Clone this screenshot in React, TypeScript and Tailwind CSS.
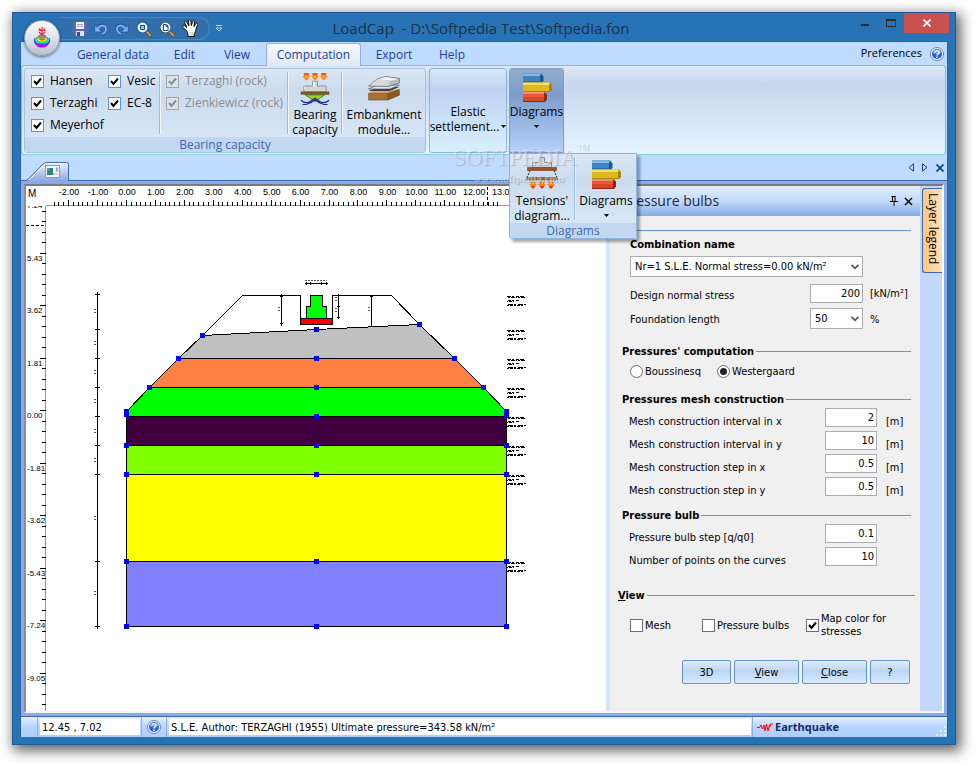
/**
 * @fileoverview LoadCap main window: ribbon, section drawing and pressure bulbs panel
 * @version 1.0.0
 */

import { memo, useState } from 'react';
import type { ReactNode } from 'react';

const TABS = ['General data', 'Edit', 'View', 'Computation', 'Export', 'Help'];

const TAB_WIDTHS: Record<string, string> = {
  'General data': 'w-[88px]',
  Edit: 'w-[55px]',
  View: 'w-[50px]',
  Computation: 'w-[95px]',
  Export: 'w-[58px]',
  Help: 'w-[58px]',
};

const MESH_FIELDS = [
  { id: 'interval-x', label: 'Mesh construction interval in x', value: '2', unit: '[m]' },
  { id: 'interval-y', label: 'Mesh construction interval in y', value: '10', unit: '[m]' },
  { id: 'step-x', label: 'Mesh construction step in x', value: '0.5', unit: '[m]' },
  { id: 'step-y', label: 'Mesh construction step in y', value: '0.5', unit: '[m]' },
];

const BULB_FIELDS = [
  { id: 'bulb-step', label: 'Pressure bulb step [q/q0]', value: '0.1', unit: '' },
  { id: 'curve-points', label: 'Number of points on the curves', value: '10', unit: '' },
];

/* ------------------------------------------------------------------ */
/* Icons                                                               */
/* ------------------------------------------------------------------ */

const OrbLogo = () => (
  <svg viewBox="0 0 18 22" className="w-[18px] h-[22px]" aria-hidden="true">
    <path d="M9 0v7M6 1.5l2 2M12 1.5l-2 2M6 5l3 3 3-3M5.500 3.500h7" stroke="#e8302c" strokeWidth="1.200" fill="none" />
    <path d="M6.500 8h5l4 4h-13z" fill="#8d9196" stroke="#4a4d52" strokeWidth=".6" />
    <path d="M1 11.500h16c.8 4-1.500 6-3 7.500-1 2-9 2-10 0C2.500 17.500.2 15.500 1 11.500z" fill="#b512f0" />
    <path d="M1 11.500h16c.5 3-1 5-3.500 6h-9C2 16.500.5 14.500 1 11.500z" fill="#1d4bff" />
    <path d="M1.500 11.500h15c0 3-2 4.500-4 5h-7c-2-.5-4-2-4-5z" fill="#19dce0" />
    <path d="M2.500 11.500h13c0 2.500-2 3.800-4 4h-5c-2-.2-4-1.500-4-4z" fill="#37e22c" />
    <path d="M4 11.500h10c0 2-2 3-3.500 3h-3C6 14.500 4 13.500 4 11.500z" fill="#fff01e" />
    <path d="M6 11.500h6c0 1.500-1.200 2-3 2s-3-.5-3-2z" fill="#ff4b1e" />
  </svg>
);

const SaveIcon = () => (
  <svg viewBox="0 0 14 14" className="w-3.5 h-3.5" aria-hidden="true">
    <path d="M0 0h14v14H2l-2-2z" fill="#5f63b4" />
    <path d="M3 0h8v7H3z" fill="#f2f4fb" />
    <path d="M4 2.500h6M4 4.500h6" stroke="#9aa0cc" />
    <path d="M3 9h8v5H3z" fill="#dfe3f0" />
    <path d="M4 10h3v4H4z" fill="#3e4290" />
  </svg>
);

const UndoIcon = ({ flip }: { flip?: boolean }) => (
  <svg viewBox="0 0 14 14" className={flip ? 'w-3.5 h-3.5 -scale-x-100' : 'w-3.5 h-3.5'} aria-hidden="true">
    <path d="M5 5C7 1.500 12 2.500 12 7c0 3-1.500 4.500-4 5.500" fill="none" stroke="#2456ad" strokeWidth="3.200" />
    <path d="M.8 3v7h7z" fill="#86b0f5" stroke="#2456ad" strokeWidth=".8" />
    <path d="M4 6.500C6.500 2 12 3 12 7c0 2.600-1.300 4-3.800 5" fill="none" stroke="#86b0f5" strokeWidth="1.800" />
  </svg>
);

const LensIcon = ({ page }: { page?: boolean }) => (
  <svg viewBox="0 0 16 16" className="w-4 h-4" aria-hidden="true">
    <path d="M10 10l4.500 4.500" stroke="#6d4a1d" strokeWidth="3" strokeLinecap="round" />
    <path d="M10.500 10.500l4 4" stroke="#e9b25c" strokeWidth="1.500" strokeLinecap="round" />
    <circle cx="6.500" cy="6.500" r="5.400" fill="#d9ecfb" stroke="#3d5772" strokeWidth="1.200" />
    <circle cx="6.500" cy="6.500" r="4.400" fill="none" stroke="#fff" strokeWidth=".8" />
    {page ? (
      <path d="M4.500 3.500h3l1.500 1.500v4.500h-4.500zM7 3.500v2h2" fill="#fff" stroke="#1c4f80" />
    ) : (
      <path d="M4.500 4.500h4v4h-4z" fill="#8fc3ea" stroke="#1c4f80" />
    )}
  </svg>
);

const HandIcon = () => (
  <svg viewBox="0.500 1 15 16" className="w-4 h-[17px]" aria-hidden="true">
    <path
      d="M5 11.500L1.500 8c-1-1.200.5-2.500 1.700-1.500L5 8 3 3.500C2.600 2 4.300 1.500 5 2.800L7 6.500 6.600 2c0-1.500 2-1.500 2.200 0l.5 4.300 1.200-4c.5-1.300 2.100-.9 1.900.5l-.7 4.500 1.800-3c.8-1.100 2.200-.2 1.700 1L13.500 10c-.3 1.500-.5 3-1.500 4v2.500H6V14c-.2-1-.5-1.700-1-2.500z"
      fill="#fff"
      stroke="#000"
      strokeWidth=".9"
    />
    <path d="M7 13h4M7 15h4M9 14h3" stroke="#cdbf9e" strokeWidth=".7" />
  </svg>
);

const HelpIcon = () => (
  <svg viewBox="0 0 14 14" className="w-3.5 h-3.5" aria-hidden="true">
    <circle cx="7" cy="7" r="6.500" fill="#eef3fb" stroke="#76879f" />
    <circle cx="7" cy="7" r="5" fill="#2a62d8" />
    <path d="M2.500 6a4.700 4.700 0 0 1 9 0c-3 1.200-6 1.200-9 0z" fill="#6d9cf2" />
    <path d="M5 5.500C5 3 9 3 9 5.500 9 7 7 6.800 7 8.500M7 9.500v1.500" fill="none" stroke="#fff" strokeWidth="1.400" />
  </svg>
);

const BearingIcon = () => (
  <svg viewBox="0 0 30 33" className="w-[30px] h-[33px]" aria-hidden="true">
    {[6, 15, 24].map((x) => (
      <g key={x}>
        <path d={`M${x - 2.5} 0h5v3h1.500L${x} 8L${x - 4} 3h1.500z`} fill="#ff8410" />
        <path d={`M${x - 2.5} 0h5v2h-5z`} fill="#f4561a" />
        <path d={`M${x - 1} 3h2v2h-2z`} fill="#ffc02a" />
      </g>
    ))}
    <path d="M12.500 8.500h5v5h9v6h-23v-6h9z" fill="#d6d7d9" stroke="#8d8f92" />
    <path d="M13 9h2v5H5v3H4v-3h9z" fill="#f4f5f6" />
    <path d="M.5 19.500h29v2.500H.5z" fill="#96552a" stroke="#6d3a18" strokeWidth=".6" />
    <path d="M5 22.500h20l-10 7z" fill="#9ad21c" stroke="#2e6b1a" strokeWidth=".8" />
    <path d="M.5 28c3 2.500 7 3 9.500 1.500L15 26l5 3.500c2.500 1.500 6.500 1 9.500-1.500" fill="none" stroke="#1b2f86" strokeWidth="1.300" />
    <path d="M2 32.500c5 .5 9-1.500 13-5 4 3.500 8 5.500 13 5" fill="none" stroke="#1b2f86" strokeWidth="1.300" />
  </svg>
);

const EmbankmentIcon = () => (
  <svg viewBox="0 0 34 26" className="w-[34px] h-[26px]" aria-hidden="true">
    <path d="M1 18l6-4h26l-6 4z" fill="#e0a765" />
    <path d="M1 18h20v7H1z" fill="#a8713a" stroke="#6d451d" strokeWidth=".6" />
    <path d="M21 18l12-4v6l-12 5z" fill="#8a5826" stroke="#6d451d" strokeWidth=".6" />
    <path d="M1 15.500l9-4h23l-10 4z" fill="#3b4048" />
    <path d="M1 13.500l9-4h23l-10 4z" fill="#e6e9ec" stroke="#53585f" strokeWidth=".7" />
    <path d="M1 10.500L10 3l9-2.500 14 2V7l-11 4z" fill="#b9bdc2" stroke="#5b6066" strokeWidth=".7" />
    <path d="M10 3.500L19 1l13 2-8 2z" fill="#f1f3f4" />
    <path d="M2 10l8-6.500L24 5l-3 5z" fill="#d8dbde" />
  </svg>
);

const DiagramsIcon = () => (
  <svg viewBox="0 0 30 29" className="w-[30px] h-[29px]" aria-hidden="true">
    <path d="M1 .5h18l2.500 3V8l-1.500 1.500H1z" fill="#1c548f" />
    <path d="M1 .5h18l-1 2.500H1z" fill="#86b8e4" />
    <path d="M1 3h17v5.500H1z" fill="#3d83c4" />
    <path d="M1 9.500h27l2 2.500v5l-2 2H1z" fill="#a5850c" />
    <path d="M1 9.500h27L27 12.500H1z" fill="#f5df5e" />
    <path d="M1 12.500h26V18H1z" fill="#dfba1b" />
    <path d="M1 19h21.500l2.500 2.500V26.500L23 29H1z" fill="#94240f" />
    <path d="M1 19h21.500L22 21.500H1z" fill="#f58e72" />
    <path d="M1 21.500h21V28H1z" fill="#da4726" />
    <path d="M1 21.500h21V24H1z" fill="#e95d3b" />
  </svg>
);

const TensionsIcon = () => (
  <svg viewBox="0 0 32 33" className="w-8 h-[33px]" aria-hidden="true">
    <path d="M13.500 1.500h5v5h7v5h-19v-5h7z" fill="#d6d7d9" stroke="#8d8f92" />
    <path d="M1.500 11.500h29v3h-29z" fill="#96552a" stroke="#6d3a18" strokeWidth=".6" />
    <path d="M4 14.500l-3 7M28 14.500l3 7" stroke="#333" strokeDasharray="2 1" />
    <path d="M.5 21.500h31v2.500H.5z" fill="#a8683a" stroke="#6d3a18" strokeWidth=".6" />
    {[7, 16, 25].map((x) => (
      <g key={x}>
        <path d={`M${x - 2.5} 25h5v3h1.500L${x} 33L${x - 4} 28h1.500z`} fill="#ff8410" />
        <path d={`M${x - 1} 25h2v3h-2z`} fill="#ffc02a" />
        <path d={`M${x - 2.5} 30h5L${x} 33z`} fill="#ee2f1c" />
      </g>
    ))}
  </svg>
);

const Caret = () => (
  <svg viewBox="0 0 5 3" className="w-[5px] h-[3px] shrink-0" aria-hidden="true">
    <path d="M0 0h5L2.500 3z" fill="#000" />
  </svg>
);

/* ------------------------------------------------------------------ */
/* Form controls                                                       */
/* ------------------------------------------------------------------ */

interface TickProps {
  label: ReactNode;
  checked?: boolean;
  disabled?: boolean;
  ribbon?: boolean;
}

/**
 * @component
 * @description Tick box with its label, in ribbon or panel look
 */
const Tick = ({ label, checked, disabled, ribbon }: TickProps) => (
  <label className={`flex items-center ${ribbon ? 'gap-1.5' : 'gap-0.5'} ${disabled ? 'text-[#8d8d8d]' : ''}`}>
    <span className="grid shrink-0">
      <input
        type="checkbox"
        defaultChecked={checked}
        disabled={disabled}
        className={`peer appearance-none col-start-1 row-start-1 w-[13px] h-[13px] border ${
          disabled ? 'border-[#a5a5a5] bg-[#d9e3f0]' : ribbon ? 'border-[#5a93e0] bg-white' : 'border-[#6e6e6e] bg-white'
        }`}
      />
      <svg
        viewBox="0 0 13 13"
        className="invisible peer-checked:visible pointer-events-none col-start-1 row-start-1 w-[13px] h-[13px]"
        aria-hidden="true"
      >
        <path d="M3 6l2.500 3L10 3.500" fill="none" stroke={disabled ? '#8d8d8d' : '#000'} strokeWidth="2" />
      </svg>
    </span>
    <span>{label}</span>
  </label>
);

const Radio = ({ label, checked }: { label: string; checked?: boolean }) => (
  <label className="flex items-center gap-0.5">
    <span className="grid shrink-0 place-items-center">
      <input
        type="radio"
        name="method"
        defaultChecked={checked}
        className="peer appearance-none col-start-1 row-start-1 w-[13px] h-[13px] rounded-full border border-[#6e6e6e] bg-white"
      />
      <span className="invisible peer-checked:visible pointer-events-none col-start-1 row-start-1 w-[7px] h-[7px] rounded-full bg-[#222]" />
    </span>
    {label}
  </label>
);

const SelectBox = ({ id, value, className }: { id: string; value: string; className: string }) => (
  <span className={`grid items-center ${className}`}>
    <select
      id={id}
      className="appearance-none col-start-1 row-start-1 w-full h-[21px] border border-[#abadb3] bg-white pl-1 pr-4 leading-4"
    >
      <option>{value}</option>
    </select>
    <svg viewBox="0 0 8 6" className="pointer-events-none col-start-1 row-start-1 justify-self-end mr-1 w-2 h-1.5" aria-hidden="true">
      <path d="M0.500.8L4 4.300 7.500.8" fill="none" stroke="#555" strokeWidth="1.800" />
    </svg>
  </span>
);

const NumberField = ({ id, label, value, unit }: { id: string; label: string; value: string; unit: string }) => (
  <div className="flex h-[19px]">
    <label htmlFor={id} className="flex-1 pt-[7px]">
      {label}
    </label>
    <input id={id} defaultValue={value} className="w-[52px] border border-[#abadb3] bg-white px-0.5 text-right" />
    <span className="w-[34px] pl-[9px] pt-[7px]">{unit}</span>
  </div>
);

const Heading = ({ children }: { children: ReactNode }) => (
  <div className="flex items-center h-4 gap-0.5">
    <h3 className="font-bold">{children}</h3>
    <div className="flex-1 h-px bg-[#6792d0]" />
  </div>
);

const PanelButton = ({ children, className }: { children: ReactNode; className: string }) => (
  <button
    className={`h-6 rounded-[2px] border border-[#6b93cf] bg-linear-to-b from-[#dfecfb] from-0% via-[#bcd5f4] via-45% to-[#d8ebfd] to-100% ${className}`}
  >
    {children}
  </button>
);

/* ------------------------------------------------------------------ */
/* Ribbon                                                              */
/* ------------------------------------------------------------------ */

const GroupCaption = ({ children }: { children: ReactNode }) => (
  <div className="h-[15px] bg-[#c1d8f0] text-center leading-[15px] text-[#3e6aaa]">{children}</div>
);

const Separator = () => <div className="w-0.5 my-[3px] border-l border-[#93bdf0] bg-white/70" />;

const DiagramsMenu = () => (
  <div className="absolute left-0 top-[85px] z-20 w-32 border border-[#8fb3dc] rounded-b-[3px] bg-linear-to-b from-[#dce7f5] via-[#cbdbee] via-30% to-[#dcebf8] shadow-[3px_3px_3px_rgba(0,0,0,0.35)]">
    <div className="flex h-[69px]">
      <button className="flex-1 flex flex-col items-center pt-0.5">
        <TensionsIcon />
        <span className="mt-1 leading-[15px]">
          Tensions'
          <br />
          diagram...
        </span>
      </button>
      <Separator />
      <button className="w-[60px] flex flex-col items-center pt-1.5">
        <DiagramsIcon />
        <span className="mt-1 leading-[15px]">Diagrams</span>
        <span className="mt-1.5">
          <Caret />
        </span>
      </button>
    </div>
    <GroupCaption>Diagrams</GroupCaption>
  </div>
);

const Watermark = () => (
  <div
    className="absolute -left-14 top-[78px] z-30 pointer-events-none whitespace-nowrap text-white/40 font-['Liberation_Serif',serif]"
    aria-hidden="true"
  >
    <div className="flex text-[23px] leading-6 [text-shadow:1px_1px_1px_rgba(90,110,140,0.35)]">
      SOFTPEDIA<sup className="text-[8px] leading-3">TM</sup>
    </div>
    <div className="pl-5 text-[11px] leading-4 font-bold [text-shadow:1px_1px_1px_rgba(90,110,140,0.35)]">www.softpedia.com</div>
  </div>
);

const Ribbon = () => (
  <div className="mr-px h-[90px] flex gap-[3px] px-0.5 pt-0.5 pb-px rounded-[4px] border border-[#8db2e3] border-b-[#8fd0dc] bg-linear-to-b from-[#dde8f5] from-0% via-[#c7d8ee] via-20% to-[#e4f4ff] to-100%">
    <div className="border border-[#a5c3e2] rounded-[3px] bg-linear-to-b from-[#dce7f4] via-[#cbdbee] via-25% to-[#dae8f6] w-[402px]">
      <div className="flex h-[68px]">
        <div className="grid grid-cols-[77px_51px] auto-rows-[22px] items-center pl-1.5 pt-px">
          <Tick ribbon checked label="Hansen" />
          <Tick ribbon checked label="Vesic" />
          <Tick ribbon checked label="Terzaghi" />
          <Tick ribbon checked label="EC-8" />
          <Tick ribbon checked label="Meyerhof" />
        </div>
        <Separator />
        <div className="grid auto-rows-[22px] items-center pl-[5px] pt-px w-[126px] content-start whitespace-nowrap">
          <Tick ribbon checked disabled label="Terzaghi (rock)" />
          <Tick ribbon checked disabled label="Zienkiewicz (rock)" />
        </div>
        <Separator />
        <button className="w-[52px] flex flex-col items-center pt-1">
          <BearingIcon />
          <span className="mt-0.5 leading-[15px]">
            Bearing
            <br />
            capacity
          </span>
        </button>
        <Separator />
        <button className="flex-1 flex flex-col items-center pt-[7px]">
          <EmbankmentIcon />
          <span className="mt-1.5 leading-[15px]">
            Embankment
            <br />
            module...
          </span>
        </button>
      </div>
      <GroupCaption>Bearing capacity</GroupCaption>
    </div>

    <button className="w-[78px] pt-4 border border-[#8db2dc] rounded-[3px] leading-[15px] bg-linear-to-b from-[#d9e6f6] via-[#bed3f1] via-25% to-[#d9f0fb] whitespace-nowrap">
      Elastic
      <span className="flex items-center justify-center gap-0.5">
        settlement...
        <Caret />
      </span>
    </button>

    <div className="relative w-[55px] -ml-px">
      <button className="w-full h-full flex flex-col items-center pt-1 border border-[#7d9cc8] rounded-t-[3px] bg-linear-to-b from-[#94abce] via-[#7c9dcc] via-30% to-[#b5d2fb]">
        <DiagramsIcon />
        <span className="mt-0.5 leading-[15px]">Diagrams</span>
        <span className="mt-1.5">
          <Caret />
        </span>
      </button>
      <DiagramsMenu />
      <Watermark />
    </div>
  </div>
);

/* ------------------------------------------------------------------ */
/* Section drawing                                                     */
/* ------------------------------------------------------------------ */

const LAYERS = [
  { points: '202.5,335.5 316.5,329.5 419.5,324.5 454.5,358.5 178.5,358.5', fill: '#c0c0c0' },
  { points: '178.5,358.5 454.5,358.5 483.5,387.5 149.5,387.5', fill: '#ff8040' },
  { points: '149.5,387.5 483.5,387.5 506.5,411.5 506.5,416.5 126.5,416.5 126.5,411.5', fill: '#00ff00' },
  { points: '126.5,416.5 506.5,416.5 506.5,445.5 126.5,445.5', fill: '#400040' },
  { points: '126.5,445.5 506.5,445.5 506.5,474.5 126.5,474.5', fill: '#80ff00' },
  { points: '126.5,474.5 506.5,474.5 506.5,561.5 126.5,561.5', fill: '#ffff00' },
  { points: '126.5,561.5 506.5,561.5 506.5,626.5 126.5,626.5', fill: '#8080ff' },
];

const HANDLES: [number, number][] = [
  [202, 335], [178, 358], [149, 387], [126, 411], [126, 414], [126, 445], [126, 474], [126, 561], [126, 626],
  [316, 329], [316, 358], [316, 387], [316, 416], [316, 445], [316, 474], [316, 561], [316, 626],
  [419, 324], [454, 358], [483, 387], [506, 411], [506, 414], [506, 445], [506, 474], [506, 561], [506, 626],
];

const LEVELS = [294, 329, 358, 387, 416, 445, 474, 561, 626];
const NOTES = [296, 330, 359, 388, 417, 446, 475, 562];
const X_UNIT = 28.95;
const Y_STEP = 52.55;

/**
 * @component
 * @description Foundation cross-section with soil layers and both rulers
 */
const SectionDrawing = memo(() => (
  <svg viewBox="26 186 580 525" className="block w-[580px] h-[525px] shrink-0" shapeRendering="crispEdges" role="img" aria-label="Foundation section">
    <defs>
      <clipPath id="rulerLeft">
        <path d="M26 206h20v505H26z" />
      </clipPath>
    </defs>

    {/* Rulers */}
    <path d="M46 205.500h560M45.500 206v505" stroke="#6f9bd8" fill="none" />
    <g stroke="#000">
      {Array.from({ length: 93 }, (_, i) => {
        const x = Math.round(69 - 3 * (X_UNIT / 6) + (i * X_UNIT) / 6) - 0.5;
        return <path key={i} d={`M${x} ${(i - 3) % 6 === 0 ? 200 : 202}V206`} />;
      })}
      {Array.from({ length: 48 }, (_, i) => {
        const y = Math.round(211.5 + (i * Y_STEP) / 5) - 0.5;
        return <path key={i} d={`M42 ${y}H46`} />;
      })}
    </g>
    <g fontFamily="Liberation Sans, Arial, sans-serif" fill="#000">
      <text x="28" y="197" fontSize="10">M</text>
      {Array.from({ length: 16 }, (_, i) => (
        <text key={i} x={69 + i * X_UNIT} y="195" fontSize="9" textAnchor="middle">
          {(i - 2).toFixed(2)}
        </text>
      ))}
      <g clipPath="url(#rulerLeft)" fontSize="8">
        {Array.from({ length: 10 }, (_, i) => (
          <g key={i}>
            <path d={`M40 ${Math.round(201 + i * Y_STEP) - 0.5}H46`} stroke="#000" />
            <text x="27" y={Math.round(208 + i * Y_STEP)}>
              {(7.24 - i * 1.81).toFixed(2).replace('-0.00', '0.00')}
            </text>
          </g>
        ))}
      </g>
    </g>
    <path d="M487.500 187V206M26 225.500H46" stroke="#000" strokeDasharray="3 2" />

    {/* Soil layers */}
    <g stroke="#000">
      {LAYERS.map((layer) => (
        <polygon key={layer.fill} points={layer.points} fill={layer.fill} />
      ))}
      <path d="M202.500 335.500L242.500 295.500H300.500V324.500H332.500V295.500H391.500L419.500 324.500" fill="none" />
      <path d="M310.500 295.500H322.500V306.500H326.500V318.500H306.500V306.500H310.500z" fill="#00ff00" />
      <path d="M300.500 318.500H332.500V324.500H300.500z" fill="#ff0000" />
    </g>

    {/* Dimension lines */}
    <g stroke="#000" fill="none">
      <path d="M97.500 292V629M281.500 294V326M338.500 294V319M371.500 295V326M305 283.500H328" />
      {LEVELS.map((y) => (
        <path key={y} d={`M95 ${y + 0.5}H100`} />
      ))}
      <path d="M280 296.500h3M280 323.500h3M337 306.500h3M337 317.500h3M370 296.500h3M306.500 282v3M310.500 282v3M321.500 282v3M326.500 282v3" />
    </g>
    <path d="M95 309v6M95 341v5M95 370v5M95 399v5M95 429v5M95 458v5M95 516v5M95 591v6M279 307v5M336 297v6M336 308v6M369 307v6" stroke="#555" strokeWidth="2" strokeDasharray="1 2" />
    <path d="M305 280.500H327" stroke="#555" strokeDasharray="2 1" />
    {NOTES.map((y) => (
      <g key={y} stroke="#000">
        <path d={`M507 ${y + 0.5}h17`} strokeDasharray="4 1 2 2 3 1" />
        <path d={`M508 ${y + 1.5}h17`} strokeDasharray="2 1 4 1 1 1" />
        <path d={`M508 ${y + 4.5}h11`} strokeDasharray="3 1 2 2" />
        <path d={`M507 ${y + 5.5}h8`} strokeDasharray="1 1 3 1" />
        <path d={`M508 ${y + 8.5}h18`} strokeDasharray="5 1 2 2" />
        <path d={`M507 ${y + 9.5}h17`} strokeDasharray="2 1 3 1" />
      </g>
    ))}

    {HANDLES.map(([x, y]) => (
      <rect key={`${x}-${y}`} x={x - 2} y={y - 2} width="5" height="5" fill="#0000ff" />
    ))}
  </svg>
));

SectionDrawing.displayName = 'SectionDrawing';

/* ------------------------------------------------------------------ */
/* Side panel                                                          */
/* ------------------------------------------------------------------ */

const PressurePanel = () => (
  <section className="w-[310px] shrink-0 bg-[#f0f0f0] text-[11px] leading-[13px] font-['DejaVu_Sans_Condensed','DejaVu_Sans',sans-serif]">
    <header className="h-[30px] flex items-center pl-3 pr-[7px] bg-linear-to-b from-[#e3eeff] via-[#c3dafb] to-[#87ade4]">
      <h2 className="flex-1 text-sm text-[#1d2b44] font-['Open_Sans',sans-serif]">Pressure bulbs</h2>
      <button aria-label="Pin" className="mr-1.5">
        <svg viewBox="0 0 8 10" className="w-2 h-2.5" aria-hidden="true">
          <path d="M2.500 0v5.500M1.500.5h4M5 0v6M0 5.500h8M4 6v4" stroke="#000" fill="none" />
        </svg>
      </button>
      <button aria-label="Close panel">
        <svg viewBox="0 0 9 9" className="w-[9px] h-[9px]" aria-hidden="true">
          <path d="M1 1l7 7M8 1L1 8" stroke="#000" strokeWidth="1.500" />
        </svg>
      </button>
    </header>

    <form className="pl-3 pr-[9px]">
      <div className="mt-3.5 h-px bg-[#6792d0]" />
      <div className="pl-2">
        <label htmlFor="combination" className="mt-1.5 block font-bold h-4 leading-4">
          Combination name
        </label>
        <SelectBox id="combination" value="Nr=1 S.L.E. Normal stress=0.00 kN/m²" className="mt-[3px] w-[233px]" />
        <div className="mt-[7px] flex h-[19px]">
          <label htmlFor="stress" className="flex-1 pt-[5px]">
            Design normal stress
          </label>
          <input id="stress" defaultValue="200" className="w-[53px] border border-[#abadb3] bg-white px-0.5 text-right" />
          <span className="w-12 pl-[7px] pt-[3px]">[kN/m²]</span>
        </div>
        <div className="mt-[5px] flex">
          <label htmlFor="length" className="flex-1 pt-[5px]">
            Foundation length
          </label>
          <SelectBox id="length" value="50" className="w-[53px]" />
          <span className="w-12 pl-[7px] pt-[5px]">%</span>
        </div>
      </div>

      <div className="mt-3.5">
        <Heading>Pressures' computation</Heading>
        <div className="mt-[5px] flex h-3.5 pl-2 gap-4">
          <Radio label="Boussinesq" />
          <Radio label="Westergaard" checked />
        </div>
      </div>

      <div className="mt-[13px]">
        <Heading>Pressures mesh construction</Heading>
        <div className="mt-px flex flex-col gap-1 pl-[7px]">
          {MESH_FIELDS.map((field) => (
            <NumberField key={field.id} {...field} />
          ))}
        </div>
      </div>

      <div className="mt-[11px]">
        <Heading>Pressure bulb</Heading>
        <div className="mt-px flex flex-col gap-1 pl-[7px]">
          {BULB_FIELDS.map((field) => (
            <NumberField key={field.id} {...field} />
          ))}
        </div>
      </div>

      <div className="mt-[21px] -mx-1">
        <Heading>
          <u>V</u>iew
        </Heading>
        <div className="mt-[9px] grid grid-cols-[72px_104px_1fr] items-center pl-3 whitespace-nowrap">
          <Tick label="Mesh" />
          <Tick label="Pressure bulbs" />
          <Tick
            checked
            label={
              <>
                Map color for
                <br />
                stresses
              </>
            }
          />
        </div>
      </div>

      <div className="mt-[22px] flex justify-end gap-[3px] pr-px">
        <PanelButton className="w-[49px]">3D</PanelButton>
        <PanelButton className="w-[65px]">
          <u>V</u>iew
        </PanelButton>
        <PanelButton className="w-[65px]">
          <u>C</u>lose
        </PanelButton>
        <PanelButton className="w-10">?</PanelButton>
      </div>
    </form>
  </section>
);

/* ------------------------------------------------------------------ */
/* Window chrome                                                       */
/* ------------------------------------------------------------------ */

const TitleBar = () => (
  <header className="relative h-7 flex items-start">
    <div className="absolute left-[11px] top-[7px] z-30 w-9 h-9 rounded-full border border-[#8c97a8] bg-linear-to-b from-[#fbfcfd] via-[#dfe3ea] to-[#b9c0cd] shadow-[0_1px_3px_rgba(0,0,0,0.5)] flex items-center justify-center">
      <OrbLogo />
    </div>
    <div className="flex-1 flex items-start">
      <div className="ml-[47px] mt-1 h-[23px] w-[150px] flex items-center gap-[7px] pl-[13px] rounded-r-full border border-[#4a84bb] border-l-0 bg-[#306fa9]">
        <button aria-label="Save"><SaveIcon /></button>
        <button aria-label="Undo"><UndoIcon /></button>
        <button aria-label="Redo"><UndoIcon flip /></button>
        <button aria-label="Zoom window"><LensIcon /></button>
        <button aria-label="Zoom page"><LensIcon page /></button>
        <button aria-label="Pan"><HandIcon /></button>
      </div>
      <button aria-label="Customize toolbar" className="ml-1.5 mt-3">
        <svg viewBox="0 0 6 7" className="w-1.5 h-[7px]" aria-hidden="true">
          <path d="M0 .5h6M0 3h6L3 6z" stroke="#dbe8f5" strokeWidth=".8" fill="none" />
        </svg>
      </button>
    </div>
    <h1 className="pt-[3px] text-[15px] leading-6 text-[#1c3048] whitespace-pre">LoadCap  - D:\Softpedia Test\Softpedia.fon</h1>
    <div className="flex-1 flex items-start justify-end pr-1.5">
      <button aria-label="Minimize" className="w-[26px] h-5 flex items-center justify-center pt-1">
        <span className="w-2 h-0.5 bg-[#2b2b2b]" />
      </button>
      <button aria-label="Maximize" className="w-[26px] h-5 flex items-center justify-center">
        <span className="w-2.5 h-2 border border-t-2 border-[#2b2b2b]" />
      </button>
      <button aria-label="Close" className="w-[45px] h-5 bg-[#c75050] flex items-center justify-center">
        <svg viewBox="0 0 8 8" className="w-2 h-2" aria-hidden="true">
          <path d="M.5.5l7 7M7.500.5l-7 7" stroke="#fff" strokeWidth="1.600" />
        </svg>
      </button>
    </div>
  </header>
);

const StatusBar = () => (
  <footer className="h-5 flex items-stretch bg-linear-to-b from-[#e6f0ff] from-0% via-[#b6d4fd] via-50% to-[#aecffb] text-[11px] font-['DejaVu_Sans_Condensed','DejaVu_Sans',sans-serif]">
    <div className="w-[17px] border-r border-[#8db2e3]" />
    <div className="ml-0.5 my-0.5 w-[100px] bg-white leading-[17px] pl-0.5">12.45 , 7.02</div>
    <div className="ml-px w-[26px] border-x border-[#8db2e3] flex items-center justify-center">
      <HelpIcon />
    </div>
    <div className="ml-0.5 my-0.5 flex-1 bg-white leading-[17px] pl-0.5">S.L.E. Author: TERZAGHI (1955) Ultimate pressure=343.58 kN/m²</div>
    <div className="ml-px w-[195px] border-l border-[#8db2e3] flex items-center gap-0.5 pl-1 font-bold text-[11px] text-[#15296b] font-['Open_Sans',sans-serif]">
      <svg viewBox="0 0 16 9" className="w-4 h-[9px]" aria-hidden="true">
        <path d="M0 4.500h2.500L4 2l1.500 4L7 2l1 6 1.500-7L11 8l1.500-6 .8 1.500V1H16" fill="none" stroke="#f00" />
      </svg>
      <span className="flex-1">Earthquake</span>
      <svg viewBox="0 0 12 12" className="self-end w-3 h-3" aria-hidden="true">
        <path d="M9 1h2v2H9zM9 5h2v2H9zM9 9h2v2H9zM5 5h2v2H5zM5 9h2v2H5zM1 9h2v2H1z" fill="#e6f1ff" />
      </svg>
    </div>
  </footer>
);

export default function App() {
  const [active, setActive] = useState('Computation');

  return (
    <div className="min-h-screen bg-white flex pt-3 pl-3 pr-5 pb-5 text-black text-xs font-['Open_Sans',sans-serif]">
      <div className="flex-1 min-w-0 flex flex-col border border-[#1f5c96] bg-[#2773b6] shadow-[3px_4px_12px_2px_rgba(0,0,0,0.6)]">
        <TitleBar />
        <div className="flex-1 flex flex-col mx-[7px] mb-[7px] border-x border-t border-[#2c62a6] bg-[#bfdbff]">
          {/* Ribbon tabs */}
          <nav className="flex h-[23px] pl-12 text-[#1e3f94]">
            {TABS.map((tab) => (
              <button
                key={tab}
                onClick={() => setActive(tab)}
                className={`${TAB_WIDTHS[tab]} ${
                  tab === active
                    ? 'relative mt-px mx-1 -mb-px rounded-t-[3px] border border-b-0 border-[#8db2e3] bg-linear-to-b from-[#f6faff] to-[#dfe9f6]'
                    : 'pt-0.5'
                }`}
              >
                {tab}
              </button>
            ))}
            <a href="#preferences" className="ml-auto flex items-center gap-2 pr-[3px] text-[11px] text-black">
              Preferences
              <HelpIcon />
            </a>
          </nav>

          <Ribbon />

          {/* Document tabs */}
          <div className="h-[26px] flex items-end border-b border-[#3f68b0]">
            <svg viewBox="0 0 44 20" className="ml-1 -mb-px w-11 h-5" aria-hidden="true">
              <defs>
                <linearGradient id="docTab" x1="0" y1="0" x2="0" y2="1">
                  <stop offset="0" stopColor="#eaf2ff" />
                  <stop offset="1" stopColor="#8ba9e6" />
                </linearGradient>
              </defs>
              <path d="M.5 19.500L3 18.500 17 4Q19.500 1.500 22 1.500h19.500q2 0 2 2V20H0z" fill="url(#docTab)" />
              <path d="M4 19L18 5q2-2.500 4-2.500h20" fill="none" stroke="#fff" />
              <path d="M.5 19.500L3 18.500 17 4Q19.500 1.500 22 1.500h19.500q2 0 2 2V20" fill="none" stroke="#3f68b0" />
              <path d="M20.500 4.500h14v12h-14z" fill="#f6f7f8" stroke="#9a9a9a" />
              <path d="M22 7h6v7h-6z" fill="#2f7f86" />
              <path d="M22 7h3v3h-3z" fill="#4f9f78" />
              <path d="M32 6.500v4" stroke="#3a5f90" />
              <path d="M28 12h5v2h-5z" fill="#cfcfcf" />
            </svg>
            <div className="ml-auto flex items-center gap-2 pr-[3px] h-full text-[#15428b]">
              <button aria-label="Previous document">
                <svg viewBox="0 0 6 9" className="w-1.5 h-[9px]" aria-hidden="true"><path d="M5.500.8v7.400L1 4.500z" fill="none" stroke="#15428b" /></svg>
              </button>
              <button aria-label="Next document">
                <svg viewBox="0 0 6 9" className="w-1.5 h-[9px]" aria-hidden="true"><path d="M.5.8v7.400L5 4.500z" fill="none" stroke="#15428b" /></svg>
              </button>
              <button aria-label="Close document">
                <svg viewBox="0 0 8 8" className="w-2 h-2" aria-hidden="true"><path d="M.5.5l7 7M7.500.5l-7 7" stroke="#15428b" strokeWidth="1.800" /></svg>
              </button>
            </div>
          </div>

          {/* Work area */}
          <main className="flex-1 flex bg-[#8ba9e6] p-[3px] border-b border-[#3f68b0]">
            <div className="flex-1 min-w-0 flex border-2 border-t-[#7b7b7b] border-l-[#8a8f98] border-r-white border-b-[#f4f4f4] bg-white">
              <div className="flex-1 min-w-0 overflow-hidden bg-white">
                <SectionDrawing />
              </div>
              <div className="w-1 bg-[#d7e5fb]" />
              <PressurePanel />
              <aside className="w-[22px] shrink-0 pl-0.5 pt-0.5 bg-[#c3d7f8]">
                <button className="w-5 h-[85px] rounded-l-[3px] border border-r-0 border-[#3f68b0] bg-linear-to-r from-[#ffc57d] to-[#ffe2bb] [writing-mode:vertical-rl] text-left pt-1">
                  Layer legend
                </button>
              </aside>
            </div>
          </main>

          <StatusBar />
        </div>
      </div>
    </div>
  );
}
